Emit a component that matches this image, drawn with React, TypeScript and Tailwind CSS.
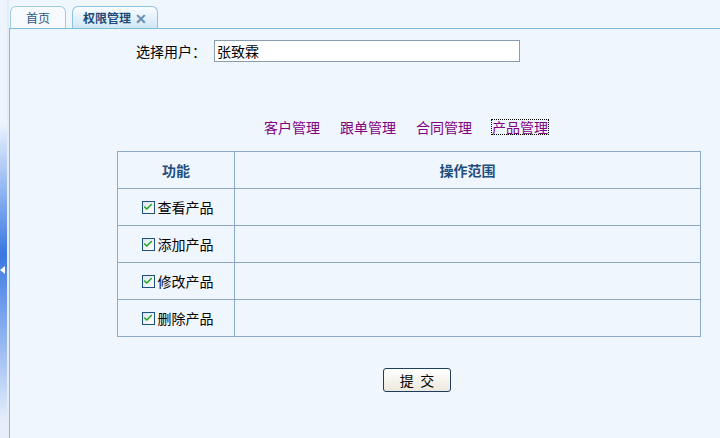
import { Check } from 'lucide-react';

const font = { fontFamily: '"Noto Sans CJK SC", "Liberation Sans", sans-serif' };

const rows = ['查看产品', '添加产品', '修改产品', '删除产品'];
const links = ['客户管理', '跟单管理', '合同管理', '产品管理'];

function Box() {
  return (
    <span className="flex h-[13px] w-[13px] items-center justify-center border border-[#1c5180] bg-gradient-to-br from-[#dce6ee] to-white">
      <Check size={10} strokeWidth={3.5} className="text-[#21a121]" />
    </span>
  );
}

export default function App() {
  return (
    <div className="flex h-[438px] w-[720px] overflow-hidden bg-[#f0f6fe] text-[14px] text-black" style={font}>
      {/* collapse strip */}
      <div className="relative w-[7px] shrink-0 bg-gradient-to-b from-[#eef4fc] from-[28%] via-[#3a76e0] via-[58%] to-[#e6eefa] to-[96%]">
        <span className="absolute left-0 top-[266px] h-0 w-0 border-y-[4px] border-r-[5px] border-y-transparent border-r-white" />
      </div>
      <div className="w-[2px] shrink-0 bg-[#e4eefa]" />

      <div className="flex flex-1 flex-col">
        {/* tabs */}
        <div className="flex h-[28px] items-end gap-[6px] pl-[1px] text-[12px]">
          <div className="flex h-[22px] w-[56px] items-center justify-center rounded-t-[6px] border border-b-0 border-[#9ccbe4] bg-[#f6fafe] text-[#2a5680]">
            首页
          </div>
          <div className="flex h-[22px] w-[86px] items-center justify-center gap-[4px] rounded-t-[6px] border border-b-0 border-[#8cc2e2] bg-gradient-to-b from-[#fafdff] to-[#cfe7f8] font-bold text-[#1e4a78]">
            权限管理
            <span className="text-[14px] leading-none text-[#6a8cae]">✕</span>
          </div>
        </div>

        {/* content */}
        <div className="flex flex-1 flex-col border-l border-t border-[#7cbade]">
          <div className="ml-[126px] mt-[11px] flex h-[22px] items-center">
            <span className="w-[78px]">选择用户：</span>
            <div className="flex h-[22px] w-[306px] items-center border border-[#8a9cb0] bg-white pl-[2px] leading-none">
              张致霖
            </div>
          </div>

          <div className="ml-[254px] mt-[55px] flex h-[20px] items-center gap-[20px] text-[#800080]">
            {links.map((l, i) => (
              <span key={l} className={i === 3 ? 'outline-1 outline-dotted outline-black leading-none' : 'leading-none'}>
                {l}
              </span>
            ))}
          </div>

          <table className="ml-[107px] mt-[14px] w-[584px] border-collapse">
            <thead>
              <tr className="h-[37px] font-bold text-[#1f4f7e]">
                <th className="w-[117px] border border-[#8da9c8]">功能</th>
                <th className="border border-[#8da9c8]">操作范围</th>
              </tr>
            </thead>
            <tbody>
              {rows.map(r => (
                <tr key={r} className="h-[37px]">
                  <td className="border border-[#8da9c8]">
                    <div className="flex items-center justify-center gap-[3px] pl-[3px]">
                      <Box />
                      {r}
                    </div>
                  </td>
                  <td className="border border-[#8da9c8]" />
                </tr>
              ))}
            </tbody>
          </table>

          <div className="ml-[373px] mt-[31px]">
            <button className="h-[24px] w-[68px] rounded-[3px] border border-[#213d5e] bg-gradient-to-b from-white to-[#ebe8dc] leading-none">
              提&nbsp;&nbsp;交
            </button>
          </div>
        </div>
      </div>
    </div>
  );
}
